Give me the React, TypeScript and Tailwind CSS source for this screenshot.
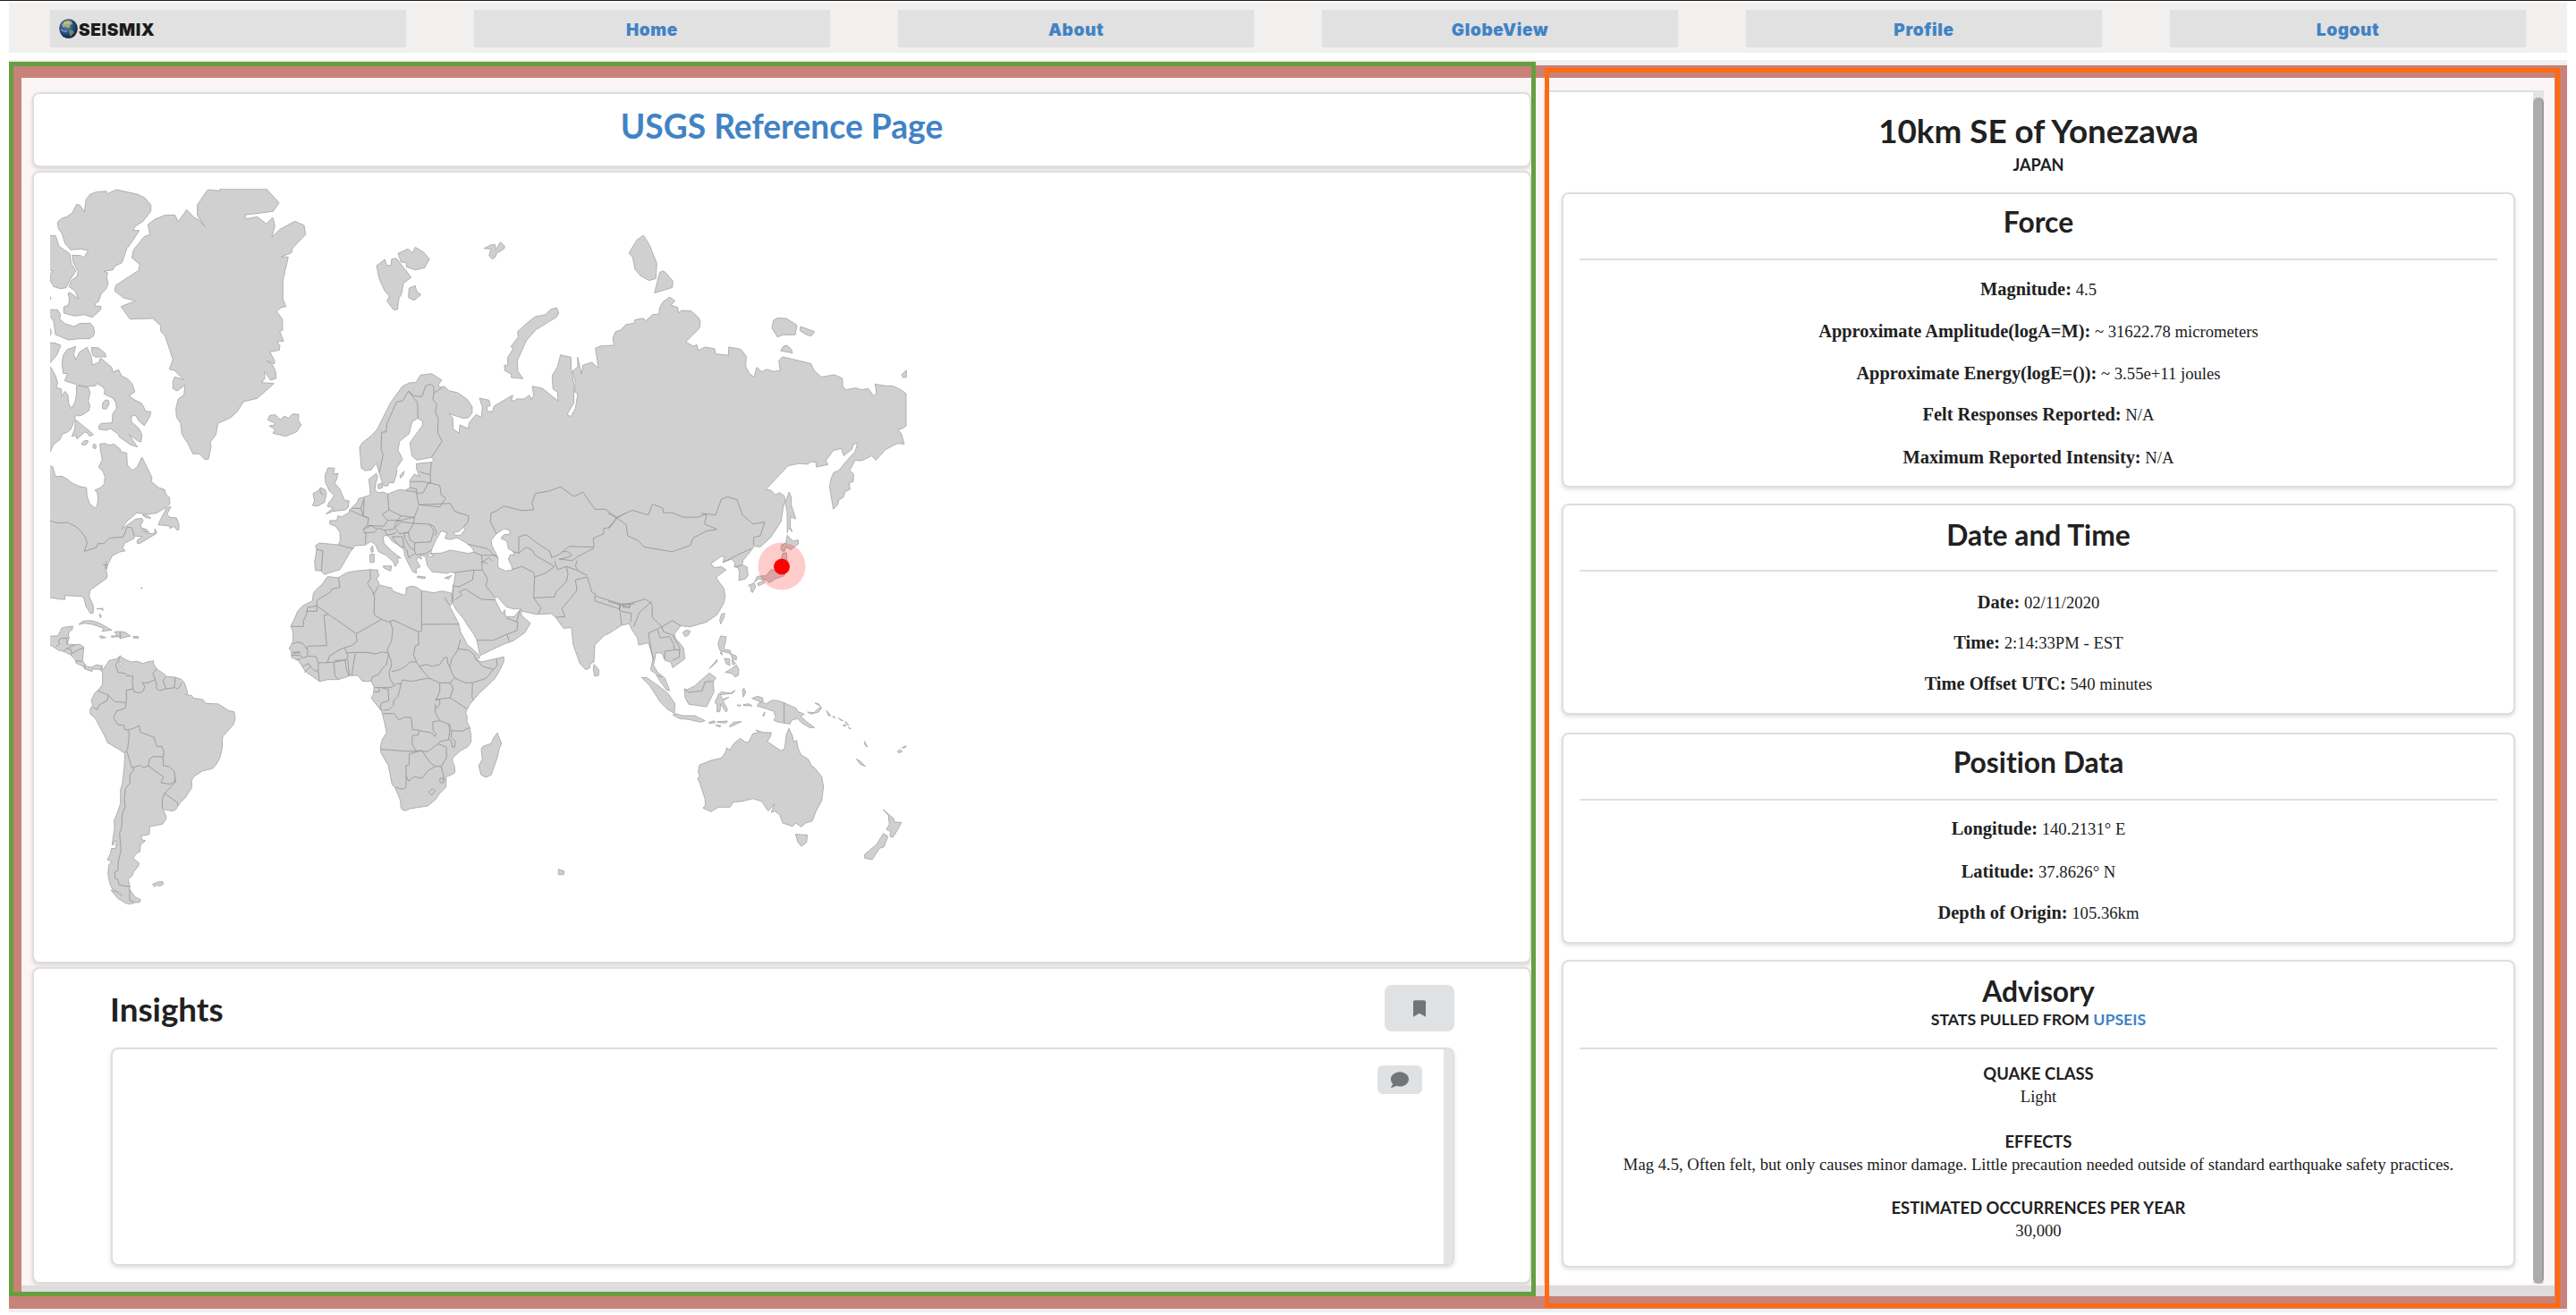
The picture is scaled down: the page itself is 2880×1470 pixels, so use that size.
import React from "react";
import { FaBookmark, FaComment } from "react-icons/fa";

/* ---------- world map data ---------- */

// Each sheet: [x origin, y origin, x units per pixel, y units per pixel]
const sheets: Record<string, [number, number, number, number]> = {
  a: [40, 190, 3, 3],
  b: [300, 200, 3, 3],
  c: [680, 240, 3, 2.8],
  d: [40, 680, 3, 3],
  e: [310, 620, 3, 3],
  f: [660, 640, 3, 3],
};

function line(sheet: string, points: string) {
  const [ox, oy, sx, sy] = sheets[sheet];
  return points
    .trim()
    .split(/\s+/)
    .map((p) => {
      const [x, y] = p.split(",").map(Number);
      return `${(ox + x / sx).toFixed(1)} ${(oy + y / sy).toFixed(1)}`;
    })
    .join("L");
}

const area = (...parts: [string, string][]) => "M" + parts.map(([s, p]) => line(s, p)).join("L") + "Z";
const areas = (sheet: string, list: string[]) => list.map((p) => area([sheet, p])).join("");
const strokes = (sheet: string, list: string[]) => list.map((p) => "M" + line(sheet, p)).join("");

const eurasia = area(
  ["b", "158,1230 170,1221 234,1227 241,1215 240,1185 226,1165 206,1157 206,1146 230,1145 233,1130 245,1133 270,1120 272,1110 298,1085 303,1072 325,1066 342,1060 341,1038 337,1007 362,988 367,1000 360,1020 357,1045 370,1052 385,1050 400,1057 440,1042 460,1045 475,1035 475,1010 490,990 507,998 497,972 497,955 547,950 555,942 548,934 498,943 482,930 475,885 518,825 517,812 500,803 482,815 472,855 440,880 435,910 450,940 430,970 430,990 420,1020 405,1018 400,1030 385,1028 372,985 362,953 345,975 325,979 312,970 306,900 315,885 345,862 365,840 385,800 410,750 450,695 475,683 495,683 510,658 548,653 582,675 570,690 575,700 590,695 605,710 635,717 668,740 684,765 683,785 672,800 655,803 605,787 618,800 620,840 640,852 642,825 670,837 675,815 697,790 715,800 718,765 708,735 740,742 745,760 732,765 735,780 752,780 757,762 820,725 815,743 828,745 832,738 858,738 875,725 882,740 890,725 885,695 920,703 972,745 970,715 955,705 952,660 970,630 980,590 1015,598 1016,640 1025,690 1025,750 1002,790 1015,797 1030,770 1038,720 1028,715 1030,680 1020,645 1038,630 1037,598 1045,630 1050,655 1055,625 1085,615 1107,635 1097,568 1115,560 1160,558 1155,535 1165,512 1180,508 1200,488"],
  ["c", "86,340 90,329 118,324 126,332 150,312 170,312 173,290 183,273 206,258 224,270 210,283 233,290 236,308 246,300 278,301 303,322 309,335 306,355 260,398 285,412 297,407 302,425 325,414 357,420 360,436 403,440 404,414 445,421 463,443 461,475 472,495 489,509 498,478 515,491 533,484 555,491 577,487 572,458 584,445 680,466 690,487 715,508 758,501 785,512 787,540 799,548 830,542 850,548 872,544 890,567 900,560 895,530 930,536 955,536 980,547 999,560 999,661 985,670 972,671 984,688 993,718 970,716 930,735 898,768 883,755 850,770 828,769 810,800 823,812 822,835 808,840 811,860 795,867 788,885 773,893 770,907 755,922 742,850 748,825 757,806 772,802 800,770 828,742 836,715 823,718 817,735 790,754 782,732 755,738 730,770 737,782 698,790 697,775 680,773 670,781 640,779 603,786 529,860 546,863 560,877 575,870 590,880 594,895 587,915 580,960 545,1010 510,1040 490,1037 480,1050 470,1062 452,1082 449,1095 466,1103 469,1130 460,1140 438,1145 440,1118 435,1105 423,1102 425,1090 414,1078 385,1088 390,1070 378,1070 345,1092 355,1105 380,1102 395,1112 362,1135 372,1150 388,1170 392,1195 388,1215 365,1252 330,1275 275,1290 243,1287 222,1312 225,1325 252,1355 257,1390 216,1418 210,1400 190,1395 180,1372 160,1372 155,1395 152,1410 165,1432 190,1450 206,1490 195,1487 170,1455 160,1437 142,1425 150,1390 143,1365 135,1340 102,1347 98,1325 80,1300 70,1280 58,1283 45,1285 20,1300 0,1312"],
  ["e", "1098,270 1065,303 1062,360 1050,365 1048,380 1035,386 1015,365 992,300 987,245 960,247 935,212 920,198 870,200 820,190 817,180 795,183 768,175 748,152 740,142 728,142 732,155 745,180 755,200 762,185 766,208 795,208 815,183 820,205 849,230 830,262 790,290 760,300 680,338 675,315 669,285 655,260 640,240 625,215 600,185 590,165 587,130 598,62"],
  ["b", "610,1318 600,1323 575,1320 550,1318 535,1300 530,1282 527,1265 508,1262 515,1275 500,1268 497,1280 510,1300 495,1308 497,1322 485,1318 470,1290 458,1265 455,1245 440,1230 415,1215 405,1200 395,1195 385,1200 388,1222 410,1245 445,1272 432,1270 436,1285 425,1300 420,1285 395,1262 370,1250 360,1228 345,1215 325,1228 290,1230 275,1250 255,1285 240,1310 200,1322 188,1327 178,1315 158,1313 155,1285 162,1245"]
);

const africa = area(
  ["e", "170,73 180,75 205,77 235,60 262,55 312,50 338,52 336,60 342,68 333,82 340,94 343,102 368,108 384,112 387,122 425,136 432,130 432,112 448,106 465,108 484,121 525,128 552,122 582,128 588,150 584,167 579,175 595,205 609,233 614,258 630,287 635,300 670,330 680,345 668,350 684,360 760,343 760,358 748,385 730,415 700,445 680,462 656,490 645,503 635,522 632,530 637,545 636,560 645,578 649,600 650,628 638,645 615,657 588,682 587,692 594,707 596,730 590,735 567,745 566,765 566,780 545,800 530,822 505,843 470,848 445,852 430,859 420,856 415,850 413,825 396,783 385,770 378,735 373,708 348,665 346,645 352,620 367,597 360,565 355,545 350,525 322,490 315,480 322,470 325,445 320,435 315,424 300,425 285,424 270,405 245,406 205,419 170,419 142,425 110,403 95,393 82,372 70,355 48,345 47,325 40,315 52,292 53,262 46,240 60,210 68,190 85,172 118,155 121,130 130,118 150,100 165,78"]
);

const northAmerica = areas("a", [
  "73,175 88,162 104,157 122,144 137,115 149,119 163,141 169,98 182,82 202,74 236,71 240,80 270,66 343,82 366,94 386,117 386,138 360,172 333,190 326,202 347,203 322,242 305,264 289,311 265,323 259,335 228,340 242,346 237,357 243,382 235,400 219,416 211,440 198,450 200,457 218,457 218,468 190,494 162,485 131,490 94,480 94,459 110,452 113,432 108,413 115,411 143,432 132,406 111,391 120,370 138,357 142,340 126,312 122,286 150,287 161,294 176,270 150,265 117,268 98,246 88,213 76,197",
  "40,221 66,220 78,256 114,281 119,315 135,338 118,364 101,395 82,398 60,391 49,372 48,350 57,338 40,335",
  "40,468 73,469 83,485 80,500 98,515 128,525 146,515 183,514 194,527 197,547 192,558 179,566 145,566 110,570 66,552 60,508 48,490 40,480",
  "40,425 50,426 50,434 40,434",
  "40,530 50,533 52,547 48,556 40,556",
  "40,580 63,580 84,588 70,622 50,645 40,655",
  "97,707 107,683 92,682 88,650 92,622 105,602 134,592 127,617 135,637 146,611 172,595 186,625 190,654 212,645 217,630 255,662 258,678 278,670 287,690 310,702 323,716 332,744 313,757 333,772 355,782 369,809 386,811 383,826 364,857 346,842 335,823 320,826 321,845 346,867 356,887 353,912 345,910 313,888 341,929 318,922 280,895 276,885 249,867 237,873 213,870 211,858 220,850 256,848 258,818 271,799 268,779 258,765 229,751 232,741 226,728 205,716 200,724 168,727 131,718",
  "187,595 211,597 233,615 235,627 217,626 201,628 190,620",
  "226,779 234,771 244,773 246,785 236,802 224,800 223,790",
  "40,655 52,664 66,690 74,715 68,729 86,735 86,760 98,742 108,755 110,782 119,800 131,780 137,750 136,724 175,728 182,745 176,775 182,790 178,807 157,821 143,825 135,820 128,845 117,870 105,880 90,885 80,905 60,920 48,945 40,955",
  "134,838 183,878 193,887 180,893 175,884 165,878 138,902 135,890 121,893 130,872",
  "153,918 162,908 176,908 170,920 158,923",
  "191,925 196,918 203,924 200,935 193,932",
  "40,990 57,995 66,1028 87,1027 107,1037 120,1049 146,1061 170,1066 172,1095 180,1117 197,1134 206,1125 209,1098 206,1083 198,1074 217,1066 230,1052 232,1030 226,1012 211,996 223,972 217,940 215,919 231,917 247,923 262,919 283,936 287,946 305,949 307,990 325,1007 340,997 356,963 390,1032 387,1044 411,1065 432,1072 437,1089 449,1099 449,1121 437,1132 404,1151 378,1154 339,1150 304,1180 288,1204 335,1171 355,1168 360,1175 352,1190 356,1208 372,1218 398,1220 400,1203 406,1218 373,1238 350,1252 340,1252 341,1241 358,1229 331,1228 330,1235 298,1252 291,1268 301,1277 282,1281 257,1293 243,1320 236,1343 240,1362 237,1370 182,1409 179,1430 193,1462 193,1485 184,1488 168,1463 162,1436 153,1430 98,1427 98,1440 85,1440 48,1434 40,1434",
  "411,1190 415,1180 438,1135 453,1129 440,1155 450,1165 472,1167 480,1187 480,1206 472,1207 465,1195 449,1202 450,1194",
  "357,1156 375,1159 386,1168 370,1166",
  "357,1201 365,1212 380,1215 372,1206",
  "205,1472 225,1470 225,1478 222,1472",
  "213,1488 217,1503 220,1495",
  "353,1401 356,1401 356,1404 353,1404",
  "778,838 785,823 803,821 820,837 833,826 848,832 861,818 882,820 881,840 890,855 875,878 838,893 796,883 803,870 783,858 802,855 803,850",
  "376,183 400,165 432,152 467,151 478,174 506,133 530,158 547,167 567,191 542,152 542,116 577,66 617,70 618,63 773,63 816,110 796,139 701,151 705,164 743,157 773,181 795,160 802,187 792,226 819,199 869,172 900,186 905,216 862,262 857,278 823,291 847,292 829,370 829,433 839,458 824,461 807,474 827,500 828,538 818,540 831,574 808,576 819,589 817,604 785,610 801,640 800,651 775,640 795,655 804,675 806,699 788,705 767,676 768,700 757,713 799,716 743,766 697,777 674,812 653,831 611,850 604,888 585,913 588,928 579,970 566,970 548,952 527,952 510,917 490,886 486,850 472,829 470,800 478,768 497,754 500,722 474,741 460,733 460,710 466,694 495,703 466,673 448,668 460,636 434,557 419,541 419,522 392,498 316,500 286,458 334,439 294,429 265,406 268,387 345,337 349,317 322,294 328,268 363,224 383,216",
]);

const southAmerica = areas("d", [
  "144,54 158,43 185,41 212,49 255,73 222,77 228,67 190,54 165,50",
  "264,79 282,78 300,80 317,93 300,97 283,101 280,95 254,97 253,93 274,92",
  "213,94 222,93 235,98 220,101",
  "328,94 344,95 345,100 328,100",
  "40,94 74,92 88,65 124,60 122,72 112,78 108,97 113,96 105,120 131,122 148,121 161,130 157,176 170,195 186,198 205,189 220,193 224,208 243,180 246,175 270,170 283,159 290,165 300,172 320,180 342,178 359,185 375,180 395,176 395,186 405,203 430,220 440,229 467,231 488,238 498,249 505,268 509,285 502,289 524,293 527,301 560,306 570,319 613,321 646,343 665,347 669,369 663,390 641,414 626,432 625,470 618,500 604,526 592,538 560,545 530,564 523,577 523,602 500,637 484,652 470,674 460,680 433,676 426,671 438,700 436,708 425,724 382,732 381,758 362,762 352,762 357,777 368,779 352,792 349,817 340,820 326,838 346,854 345,863 328,884 323,897 310,909 316,934 311,938 320,950 333,968 352,977 348,986 330,987 318,994 300,988 275,973 252,945 270,950 288,964 285,956 258,943 249,925 242,890 245,860 255,850 240,843 250,825 254,805 268,806 271,780 264,780 262,793 256,793 264,740 263,710 272,690 284,655 284,608 290,590 297,530 299,487 282,475 240,450 233,432 200,370 183,354 182,338 191,325 186,310 197,285 208,276 224,255 224,215 215,205 190,204 188,212 164,203 160,195 134,183 134,175 116,155 90,143 77,141 40,117",
  "392,925 410,918 425,916 428,925 415,932 405,927 398,934",
]);

const europeanIslands = areas("b", [
  "200,969 222,970 218,990 234,988 228,1010 222,1020 240,1040 250,1065 255,1077 271,1080 268,1102 258,1110 215,1115 193,1124 218,1103 198,1098 203,1085 215,1072 220,1060 203,1045 198,1030 192,1020 190,995",
  "150,1055 168,1045 175,1035 190,1042 195,1055 188,1085 165,1097 148,1095 155,1080",
  "385,1298 413,1298 410,1315 388,1305",
  "340,1260 355,1258 355,1285 342,1287",
  "343,1240 350,1230 352,1250 346,1253",
  "500,1332 527,1335 525,1340 500,1337",
  "592,1338 614,1330 605,1342",
  "367,1025 380,1020 383,1035 370,1040",
  "442,995 455,980 452,995 443,1003",
  "363,291 391,270 397,290 411,290 414,268 430,267 479,330 453,350 446,388 438,400 433,438 420,439 398,410 406,393 390,375 372,335",
  "435,250 468,235 484,248 493,229 520,245 540,268 525,298 493,305 463,295 463,281 445,279",
  "472,367 493,358 497,377 512,388 489,407 470,398",
  "724,233 745,222 760,220 763,238 778,212 793,226 790,235 765,250 763,260 752,269 740,258 747,235",
  "792,625 803,625 803,598 823,567 813,563 838,530 836,512 860,490 893,463 930,455 947,437 967,432 974,450 967,463 897,506 865,543 835,610 837,645 854,670 815,666 815,655 793,643",
]);

const asianIslands = areas("c", [
  "69,121 96,79 118,65 138,94 163,152 160,200 137,206 108,191 90,171 82,133",
  "173,180 184,176 191,180 217,208 215,228 155,245",
  "549,355 554,331 568,323 598,325 633,346 627,376 585,376 568,383",
  "645,350 692,366 681,380 663,375 643,363",
  "578,426 588,412 600,409 614,421 618,433",
  "985,500 1000,487 1000,509 988,509",
  "600,885 607,868 614,885 614,910 629,952 612,945 610,975 617,993 603,980 601,995 600,930 594,900",
  "600,1003 620,1022 637,1018 638,1030 612,1049 596,1040 590,1055 580,1050 580,1035 596,1028",
  "585,1060 598,1058 600,1085 590,1130 560,1140 540,1152 530,1143 505,1140 490,1150 500,1132 530,1130 547,1110 560,1115 575,1100 580,1080",
  "500,1155 520,1145 525,1152 505,1162",
  "470,1160 490,1153 494,1165 484,1183 478,1178 480,1168",
  "374,1268 380,1250 391,1248 388,1262 377,1281",
  "250,1308 262,1300 275,1303 270,1315 258,1321",
]);

const oceania = areas("f", [
  "437,213 455,215 453,235 447,257 470,262 470,272 435,262 428,240",
  "440,265 442,277 435,270",
  "470,272 490,280 490,293 478,290",
  "400,322 425,292 425,300",
  "450,288 467,290 468,312 455,305",
  "475,290 487,305 478,310",
  "452,335 470,325 490,310 498,325 496,345 485,350 475,338 455,335",
  "315,390 325,393 350,380 370,362 400,337 421,353 412,368 415,400 405,420 390,450 330,442 318,420",
  "172,352 190,353 235,385 260,405 284,440 282,472 260,460 235,435 200,380",
  "277,478 285,473 310,480 350,480 385,497 370,502 330,493 300,490",
  "397,503 415,497 420,503 400,506",
  "425,500 460,498 455,505 430,503",
  "420,512 438,513 435,518",
  "467,515 480,502 507,500 480,512 468,518",
  "430,408 440,400 470,405 485,395 478,405 435,410 445,425 465,418 445,430 460,460 455,468 437,440 435,465 425,468 425,440 418,437",
  "510,393 515,388 521,402 513,418",
  "492,444 505,445 500,449",
  "513,443 530,440 543,447 515,446",
  "578,480 585,468 582,482",
  "542,422 560,415 578,420 580,438 590,440 610,428 630,430 650,437 690,455 697,467 718,475 705,482 725,500 752,520 735,520 710,505 695,490 675,495 670,508 650,505 625,500 615,495 622,485 615,465 585,455 560,448 565,438 575,435",
  "728,468 750,470 765,455 775,455 765,468 740,475",
  "753,437 765,440 776,455 768,446",
  "792,463 800,472 806,481 799,480",
  "813,482 822,487 817,487",
  "832,488 848,497 840,495",
  "847,512 858,510 855,516",
  "855,498 867,513 860,508",
  "865,519 874,524 868,523",
  "919,566 930,585 922,580",
  "892,625 905,633 923,650 905,643",
  "1030,600 1037,594 1046,600 1036,605",
  "1045,588 1060,581 1055,588",
  "378,790 386,780 385,760 367,705 360,690 367,683 362,670 366,645 380,640 405,630 440,622 452,605 458,588 468,595 480,575 503,556 518,568 530,570 545,540 565,537 555,528 580,536 607,537 605,548 593,567 640,598 652,590 657,545 666,523 678,548 682,568 692,563 697,590 707,612 730,625 742,648 752,655 776,685 782,718 776,765 757,800 745,833 722,840 707,853 690,840 678,851 645,840 635,812 618,800 607,805 618,775 597,800 575,768 545,758 510,767 480,770 468,787 430,787 405,802",
  "688,878 728,880 725,905 708,918 697,905",
  "982,795 1000,810 1017,825 1020,837 1043,838 1035,855 1015,888 1005,885 1007,868 993,862 1003,845 1000,815",
  "983,875 998,885 985,920 970,925 945,963 920,958 920,945 960,912",
  "12,308 28,325 28,345 14,347 10,325",
]);

const africanIslands = areas("e", [
  "738,598 752,633 745,650 738,680 718,738 700,747 683,738 676,708 688,685 684,652 690,643 718,633 725,615",
  "943,1055 963,1062 960,1073 943,1073",
]);

const seas =
  areas("b", [
    "545,1250 560,1215 580,1180 600,1187 592,1205 610,1210 633,1203 665,1222 686,1240 689,1252 670,1256 640,1250 610,1245 580,1255 548,1256",
    "620,1185 640,1182 655,1168 660,1175 645,1195 628,1195",
    "747,1212 765,1190 790,1173 810,1178 810,1192 790,1193 780,1205 800,1215 805,1240 822,1250 825,1262 812,1260 805,1275 817,1300 818,1312 795,1315 770,1303 770,1270 750,1230",
    "532,1262 545,1258 556,1263 540,1268",
  ]) + areas("d", ["280,178 288,185 285,194 279,188"]);

const borders =
  strokes("a", [
    "48,1177 75,1184 107,1182 135,1196 150,1211 166,1230 172,1250 163,1279 204,1266 208,1253 228,1253 248,1234 294,1231 306,1198 323,1200 330,1228",
    "226,1324 240,1326",
    "236,1313 234,1338",
  ]) +
  strokes("d", [
    "68,128 80,120 76,108 86,100 104,100 104,120",
    "92,145 105,134 131,122",
    "105,134 118,138 121,150 118,154 146,138 161,132",
    "134,176 155,178",
    "283,78 283,101",
    "164,190 165,203",
    "218,205 224,190",
    "283,163 268,190 276,215 300,218 305,226 326,228 324,250 327,270 330,280 345,284 360,278 366,262 357,250 375,250 399,240",
    "405,203 393,218 401,240 405,256 404,268 415,276 436,270 427,243 436,229",
    "436,270 462,267 464,264 472,270 480,266 490,250",
    "467,231 467,250 464,264",
    "327,270 303,275 305,300 300,335 270,345 261,368 275,390 296,393 297,405 308,408 314,420 308,470 300,485",
    "208,276 243,291 265,313 300,316",
    "243,291 240,308 212,325 206,340 191,332",
    "308,408 330,402 347,393 350,415 397,433 405,462 424,464 430,485 427,498 395,497 382,505 377,528 360,535 352,527 330,532 322,535 306,480",
    "427,498 428,528 448,530 465,548 467,570 465,582 450,590 420,585 428,565 400,545 377,528",
    "467,570 470,582 432,620 425,640 424,672",
    "432,620 475,652 476,662",
    "322,535 330,540 316,558 316,585 301,605 297,640 300,665 290,690 288,735 281,755 286,810 277,850 275,880 265,885 266,905 275,910 280,928 318,934",
    "315,940 315,980 330,985",
  ]) +
  strokes("e", [
    "205,77 210,110 185,115 175,128 140,148 133,155 133,172 101,177 98,200 88,222 88,241 46,241",
    "133,172 133,190 98,190",
    "133,172 172,200 265,265 350,217 325,202 326,140 320,125",
    "172,200 157,203 166,305 103,307 98,318",
    "52,300 65,293 85,297 103,320 100,340 130,342 138,363 168,362",
    "312,50 312,82 302,97 320,122 326,138",
    "326,130 340,104",
    "350,217 372,226 390,220 473,259 484,256 484,121",
    "484,234 609,233",
    "473,259 474,303 463,306 457,335 467,360",
    "378,224 387,250 383,290 368,320 373,330",
    "265,265 267,292 250,305 226,312",
    "230,330 262,328 300,328 330,333 350,326 373,330",
    "226,312 210,318 175,340 168,362 195,360 232,352 238,340 226,312",
    "190,362 193,405 205,419",
    "192,355 228,354 232,385 240,405",
    "236,352 242,405",
    "262,330 255,370 250,405",
    "138,363 137,390 142,425",
    "137,390 125,390 112,376 90,395",
    "112,376 105,365 85,375",
    "47,338 78,338 82,346 100,343",
    "52,328 75,326 76,330 52,331",
    "62,352 78,350",
    "315,424 320,410 340,402 350,385 365,370 373,335",
    "373,330 378,345 384,365 382,375 375,395 378,415 392,440 378,446 325,446",
    "384,392 410,386 430,375 445,360 467,360",
    "392,440 400,433 415,433 420,420 450,425 490,417 510,415",
    "467,360 480,380 510,415 545,430 580,430 595,413",
    "475,375 500,368 520,375 545,368 560,345 570,345 572,365 580,378",
    "614,285 605,320 585,350 578,375 585,395 595,413",
    "605,316 640,320 660,335 665,350 690,375 725,385 700,415 655,430 630,430 595,413",
    "655,430 653,480 658,488",
    "580,430 590,450 580,480 635,517",
    "545,430 545,460 530,490",
    "535,485 580,480",
    "530,488 545,485 545,500 535,515 530,512",
    "530,500 530,530 545,557 522,560 522,590 533,600 530,610 515,597 475,590 473,605 453,607 452,635 465,658",
    "355,533 392,533 408,555 425,545 450,547 453,587 475,588",
    "355,522 375,520 390,505 390,490 405,475 410,455 415,433",
    "325,460 342,460 342,446",
    "350,446 372,452 374,490 350,497 345,510 350,525",
    "346,653 378,655 440,660 485,657 443,668 442,705 432,707 432,780 420,787 396,780",
    "432,740 440,760 460,745 485,750 505,725 530,710 550,710",
    "485,657 510,695 530,710",
    "485,660 505,660 525,645 540,635 567,645 568,680 550,710 557,740 560,755 566,760",
    "540,635 545,627 575,620 580,570 545,557",
    "572,570 585,592 583,612 597,625 595,645 587,645 583,622 575,620",
    "585,590 620,592 645,580",
    "545,752 555,748 558,765 546,765 545,752",
    "508,797 520,785 530,793 518,806 508,797",
    "735,350 738,372 725,385",
    "562,143 572,163 579,168",
    "669,287 725,287 770,267 778,290",
    "770,267 803,255 808,228 768,212",
    "803,225 812,190",
    "1065,138 1150,165 1150,183 1065,155 1065,138",
    "1150,168 1200,165",
    "1158,172 1185,175",
  ]) +
  strokes("b", [
    "372,985 385,925 378,905 380,850 395,848 398,820 430,748 450,745 470,712 500,750 502,803",
    "470,712 490,728 515,730 527,695 545,688 555,697 555,718 582,700",
    "555,718 552,740 565,755 560,780 570,805 568,850 583,880 548,932",
    "547,950 543,992 515,985 507,980",
    "475,1015 515,1015 545,1020 543,992",
    "475,1035 497,1040 497,1055 520,1052 535,1022 545,1020 575,1028 580,1060 595,1070 583,1088 575,1100 505,1093 497,1055",
    "400,1057 405,1110 445,1130 490,1135 503,1100",
    "460,1045 497,1050",
    "503,1093 610,1088 625,1115 672,1130 670,1150 655,1168",
    "490,1135 487,1155 540,1158 555,1165 565,1185 558,1197",
    "540,1158 555,1180 545,1217",
    "322,1070 318,1130 337,1137 332,1162 388,1165 400,1145 382,1125 405,1110",
    "272,1110 320,1132 337,1137",
    "332,1162 318,1175 328,1190 325,1225",
    "318,1175 345,1163 365,1175 355,1185 320,1187",
    "365,1170 390,1178 420,1175 430,1150 445,1145 400,1145",
    "425,1170 445,1150 487,1155 470,1185 440,1190 425,1170",
    "430,1148 445,1130",
    "445,1145 487,1135",
    "390,1178 398,1195 420,1190 430,1185",
    "470,1185 475,1210 490,1220 545,1217",
    "470,1185 455,1190 460,1210 475,1235 490,1245 492,1220",
    "415,1200 450,1200 455,1235 440,1232 415,1200",
    "490,1245 495,1260 525,1257 548,1245",
    "455,1235 465,1245 470,1270 490,1258",
    "162,1243 183,1247 178,1315",
    "234,1227 285,1240",
    "280,1105 310,1105 320,1075",
    "310,1105 318,1130",
    "175,1040 174,1052 186,1060",
    "765,1190 745,1150 747,1120 762,1115 790,1097 850,1112 890,1110 885,1085 895,1055 940,1047 980,1033 1025,1065 1055,1050 1095,1108 1130,1108 1170,1137 1140,1170 1125,1172 1125,1190 1090,1205 1092,1235 1010,1232 975,1260 950,1270 945,1250 900,1220 865,1193 840,1200 840,1255 820,1250",
    "1170,1137 1200,1120",
    "840,1255 865,1235 885,1245 895,1262 960,1300",
    "985,1250 1005,1250 1018,1262 1000,1270 975,1275 1020,1280 1035,1268 1092,1238",
    "1035,1280 1030,1300 1040,1312",
    "960,1282 970,1310 1000,1300 1030,1310 1070,1330",
    "818,1310 850,1300 890,1320 893,1335 930,1322 960,1300",
    "893,1335 890,1405 960,1402 965,1385 1000,1350 1005,1325 1000,1300",
    "890,1405 915,1440 905,1458",
    "1070,1335 1030,1345 1035,1380 985,1440 995,1468 965,1470",
    "1070,1335 1085,1385 1100,1395",
    "715,1282 718,1312 690,1312 625,1320",
    "670,1225 735,1240 755,1260 770,1270",
    "689,1252 715,1262 718,1285 735,1290",
    "715,1262 765,1262",
    "718,1285 740,1270 750,1282",
    "718,1312 735,1340 730,1365 757,1400",
    "690,1312 685,1345 640,1368 625,1365",
    "760,1412 715,1410 660,1375 640,1385 650,1395 625,1412",
    "620,1360 617,1420",
  ]) +
  strokes("c", [
    "0,935 27,948 80,925 135,940 148,906 183,918 185,933 215,933 252,947 300,947 330,937 323,968 365,985 330,990 285,1012 275,1035 215,1055 120,1040 100,1020 65,1005 60,970 27,948 10,975 0,982",
    "310,935 360,940 380,890 400,883 432,892 450,940 485,968 525,962 510,1005 488,1010 487,1035",
    "385,1088 445,1060 480,1045",
    "423,1102 449,1098",
    "0,1210 35,1220 70,1217 90,1212 125,1203 147,1220 148,1260 180,1290 215,1270 243,1287",
    "38,1217 38,1240 78,1248 75,1275",
    "45,1285 40,1245",
    "48,1220 75,1220 72,1230 48,1228 48,1220",
    "85,1290 105,1245 147,1210",
    "180,1290 135,1310 145,1365 152,1395",
    "165,1300 175,1325 205,1320 220,1345 222,1362 190,1367",
    "180,1290 185,1305 215,1315 240,1355 238,1385 215,1395",
    "190,1367 190,1390",
    "222,1362 240,1362",
  ]) +
  strokes("f", ["318,393 330,402 375,397 385,367 412,365", "225,345 240,350", "650,437 650,505"]);

function WorldMap() {
  return (
    <svg className="block h-[800px] w-[958px]" viewBox="56 211 958 800">
      <g fill="#d0d0d0" stroke="#a9a9a9" strokeWidth="0.9" strokeLinejoin="round">
        <path d={northAmerica} />
        <path d={southAmerica} />
        <path d={africa} />
        <path d={eurasia} />
        <path d={europeanIslands} />
        <path d={asianIslands} />
        <path d={oceania} />
        <path d={africanIslands} />
      </g>
      <path d={seas} fill="#ffffff" stroke="#a9a9a9" strokeWidth="0.9" strokeLinejoin="round" />
      <path d={borders} fill="none" stroke="#979797" strokeWidth="0.9" strokeLinejoin="round" />
      <circle cx="874" cy="633" r="26.5" fill="#ff0000" fillOpacity="0.2" />
      <circle cx="874" cy="633.5" r="9" fill="#ff0000" />
    </svg>
  );
}

/* ---------- page ---------- */

const CARD =
  "rounded-[8px] border-2 border-[#dededf] bg-white shadow-[0_2px_4px_0_rgba(34,36,38,0.15)]";

function Globe() {
  return (
    <svg className="h-[22px] w-[21px]" viewBox="0 0 21 22">
      <defs>
        <radialGradient id="ocean" cx="0.38" cy="0.35" r="0.7">
          <stop offset="0" stopColor="#5b86b8" />
          <stop offset="0.55" stopColor="#2a4f86" />
          <stop offset="1" stopColor="#0d1c3a" />
        </radialGradient>
      </defs>
      <ellipse cx="10.5" cy="11" rx="10.3" ry="10.8" fill="url(#ocean)" />
      <path d="M3 7L6 3L10 1.5L14 3L15 6L12 7L12.500 9.500L9 10L7 8.500L5 9.500Z" fill="#a9b06a" />
      <path d="M11 12L15 12.500L17 15L14.500 18L12.500 20L11.500 16Z" fill="#6f8a5c" />
      <path d="M2 12Q5 15 9 14M5 5Q9 4 12 5" stroke="#c9d6e2" strokeWidth="0.8" fill="none" />
    </svg>
  );
}

const NAV = ["Home", "About", "GlobeView", "Profile", "Logout"];

function NavBar() {
  return (
    <nav className="mx-[10px] mt-[2px] flex h-14 gap-[76px] bg-[#f2f0ef] px-[46px] pt-2 font-['Inter'] text-[19px] font-black tracking-[0.6px]">
      <div className="flex h-[42px] w-[398px] items-center bg-[#e1e1e1] pl-[10px] text-[#1b1b1b]">
        <Globe />
        <span className="ml-[1px] pt-1 leading-[22px]">SEISMIX</span>
      </div>
      {NAV.map((label) => (
        <a key={label} className="flex h-[42px] w-[398px] items-center justify-center bg-[#e1e1e1] pt-1 leading-[22px] text-[#4183c4]">
          {label}
        </a>
      ))}
    </nav>
  );
}

function Fact({ label, value, className }: { label: string; value: string; className: string }) {
  return (
    <p className={`h-6 shrink-0 text-center text-[18.7px] leading-6 ${className}`}>
      <b className="text-[20.4px]">{label}</b> {value}
    </p>
  );
}

function CardHeading({ children, className }: { children: React.ReactNode; className: string }) {
  return <h3 className={`text-center font-['Lato'] text-[31.8px] font-bold leading-9 ${className}`}>{children}</h3>;
}

const Divider = ({ className }: { className: string }) => <div className={`mx-[18px] h-0.5 shrink-0 bg-[#dededf] ${className}`} />;

function Term({ title, text, className }: { title: string; text: string; className: string }) {
  return (
    <div className={`text-center ${className}`}>
      <h4 className="font-['Lato'] text-[18.4px] font-bold leading-6">{title}</h4>
      <p className="mt-0.5 text-[18.67px] leading-6">{text}</p>
    </div>
  );
}

function Details() {
  return (
    <section className="mt-[14px] flex h-[1334px] w-[1118px] border-l-2 border-t-2 border-[#dededf] bg-white">
      <div className="flex-1 pl-[18px] pr-[20px] pt-[21px]">
        <h2 className="text-center font-['Lato'] text-[36.8px] font-bold leading-[44px]">10km SE of Yonezawa</h2>
        <h4 className="mt-1 text-center font-['Lato'] text-[18.2px] font-bold leading-6">JAPAN</h4>

        <div className={`mt-[19px] flex h-[330px] flex-col ${CARD}`}>
          <CardHeading className="mt-[13px]">Force</CardHeading>
          <Divider className="mt-[23px]" />
          <Fact className="mt-5" label="Magnitude:" value="4.5" />
          <Fact className="mt-[23px]" label="Approximate Amplitude(logA=M):" value="~ 31622.78 micrometers" />
          <Fact className="mt-[23px]" label="Approximate Energy(logE=()):" value="~ 3.55e+11 joules" />
          <Fact className="mt-[22px]" label="Felt Responses Reported:" value="N/A" />
          <Fact className="mt-6" label="Maximum Reported Intensity:" value="N/A" />
        </div>

        <div className={`mt-[18px] flex h-[236px] flex-col ${CARD}`}>
          <CardHeading className="mt-[15px]">Date and Time</CardHeading>
          <Divider className="mt-[21px]" />
          <Fact className="mt-[22px]" label="Date:" value="02/11/2020" />
          <Fact className="mt-[21px]" label="Time:" value="2:14:33PM - EST" />
          <Fact className="mt-[22px]" label="Time Offset UTC:" value="540 minutes" />
        </div>

        <div className={`mt-5 flex h-[236px] flex-col ${CARD}`}>
          <CardHeading className="mt-[13px]">Position Data</CardHeading>
          <Divider className="mt-[23px]" />
          <Fact className="mt-[19px]" label="Longitude:" value="140.2131° E" />
          <Fact className="mt-6" label="Latitude:" value="37.8626° N" />
          <Fact className="mt-[22px]" label="Depth of Origin:" value="105.36km" />
        </div>

        <div className={`mt-[18px] flex h-[344px] flex-col ${CARD}`}>
          <CardHeading className="mt-[15px]">Advisory</CardHeading>
          <h4 className="mt-0.5 text-center font-['Lato'] text-[17.7px] font-bold leading-6">
            STATS PULLED FROM <a className="text-[#4183c4]">UPSEIS</a>
          </h4>
          <Divider className="mt-[19px]" />
          <Term className="mt-[15px]" title="QUAKE CLASS" text="Light" />
          <Term
            className="mt-[26px]"
            title="EFFECTS"
            text="Mag 4.5, Often felt, but only causes minor damage. Little precaution needed outside of standard earthquake safety practices."
          />
          <Term className="mt-6" title="ESTIMATED OCCURRENCES PER YEAR" text="30,000" />
        </div>
      </div>
      <div className="-mt-0.5 flex w-3 flex-col bg-[#e3e3e3] pt-2">
        <div className="flex-1 rounded-full border-r-2 border-[#9b9b9b] bg-[#acacac]" />
      </div>
    </section>
  );
}

function Insights() {
  return (
    <div className={`mt-1 h-[354px] pl-[86px] pr-[84px] pt-[18px] ${CARD}`}>
      <div className="flex justify-between">
        <h2 className="-ml-px pt-[5px] font-['Lato'] text-[36.8px] font-bold leading-[44px]">Insights</h2>
        <button className="flex h-[52px] w-[78px] items-center justify-center rounded-[8px] bg-[#e0e1e2] text-[#737475]">
          <FaBookmark className="h-[19px] w-[14px]" />
        </button>
      </div>
      <div className={`mt-[18px] flex h-[244px] overflow-hidden ${CARD}`}>
        <div className="flex flex-1 justify-end pr-6 pt-[18px]">
          <button className="flex h-8 w-[50px] items-center justify-center rounded-[6px] bg-[#e0e1e2] text-[#737475]">
            <FaComment className="h-5 w-5" />
          </button>
        </div>
        <div className="w-[10px] bg-[#e4e4e4]" />
      </div>
    </div>
  );
}

export default function App() {
  return (
    <div className="relative h-[1470px] w-[2880px] overflow-hidden bg-white font-['Liberation_Serif',serif] text-[#212121] [font-variant-ligatures:none]">
      <div className="h-px bg-[#231f20]" />
      <NavBar />
      <main className="mx-[10px] mt-2 h-[1400px] bg-[#f1efef] pt-1.5">
        <div className="flex h-[1390px] flex-col border-[14px] border-[#c88279] bg-[#fbf5f5]">
          <div className="flex h-[1350px] justify-between px-3">
            <section className="w-[1676px] pt-4">
              <div className={`h-[84px] pt-[18px] text-center ${CARD}`}>
                <a className="block font-['Lato'] text-[37.2px] font-bold leading-[36px] text-[#4183c4]">USGS Reference Page</a>
              </div>
              <div className={`mt-1 h-[886px] p-[18px] ${CARD}`}>
                <WorldMap />
              </div>
              <Insights />
            </section>
            <Details />
          </div>
          <div className="h-3 bg-[#dedbdb]" />
        </div>
      </main>
      <div className="absolute left-[10px] top-[69px] h-[1380px] w-[1707px] border-[5px] border-[#669f3f]" />
      <div className="absolute left-[1727px] top-[76px] h-[1386px] w-[1135px] border-[5px] border-[#ff6a13]" />
    </div>
  );
}
